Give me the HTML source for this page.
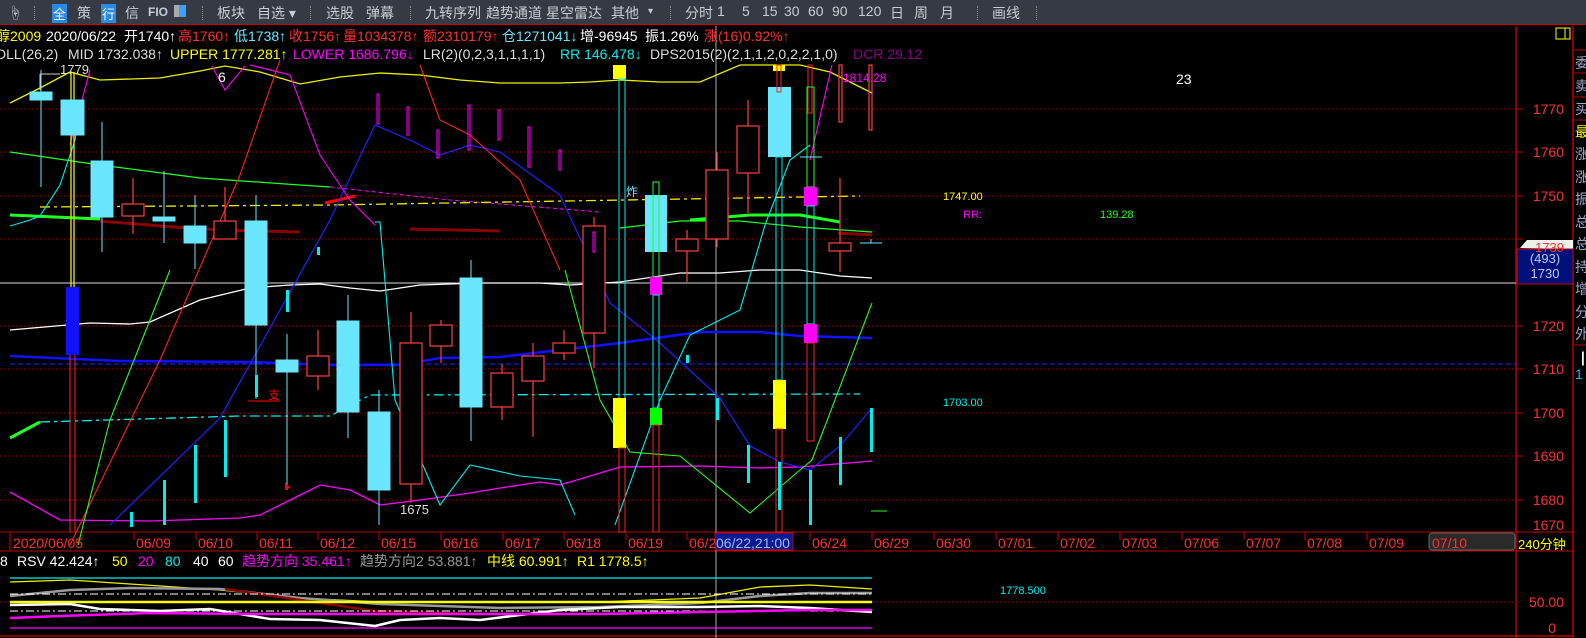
<!DOCTYPE html>
<html><head><meta charset="utf-8"><style>
*{margin:0;padding:0;box-sizing:border-box}
body{width:1586px;height:638px;background:#000;overflow:hidden;position:relative;font-family:"Liberation Sans","Noto Sans CJK SC",sans-serif}
.t{position:absolute;white-space:nowrap}
#tb{position:absolute;left:0;top:0;width:1586px;height:25px;background:#353a45;border-bottom:1px solid #c00}
#tb span{position:absolute;top:3px;font-size:14px;color:#c8ccd4}
.sep{position:absolute;top:6px;width:1px;height:14px;border-left:1px dotted #888}
.r1{top:28px;font-size:14px;line-height:17px}
.r2{top:46px;font-size:14px;line-height:17px}
.b{top:553px;font-size:14px;line-height:17px}
.pl{position:absolute;left:1516px;width:48px;text-align:right;color:#ff3030;font-size:14px}
.rp{position:absolute;left:1575px;font-size:14px;color:#9aa8c8}
.dt{position:absolute;top:535px;font-size:14px;color:#ff3030}
</style></head><body>
<div id="tb">
<span style="left:8px">☝</span><div class="sep" style="left:34px"></div>
<span style="left:52px;background:#2a8ae0;color:#fff;padding:0 1px;top:4px;font-size:13px">全</span>
<span style="left:77px">策</span>
<span style="left:101px;background:#2a8ae0;color:#fff;padding:0 1px;top:4px;font-size:13px">行</span>
<span style="left:125px">信</span>
<span style="left:148px;font-size:12px;top:5px;font-weight:bold">FIO</span>
<span style="left:174px;top:5px;width:12px;height:12px;background:#3aa0ff;border-left:5px solid #aaa"></span>
<div class="sep" style="left:202px"></div>
<span style="left:217px">板块</span><span style="left:257px">自选 ▾</span>
<div class="sep" style="left:310px"></div>
<span style="left:326px">选股</span><span style="left:366px">弹幕</span>
<div class="sep" style="left:410px"></div>
<span style="left:425px">九转序列</span><span style="left:486px">趋势通道</span><span style="left:546px">星空雷达</span><span style="left:611px">其他</span><span style="left:648px;font-size:10px;top:6px">▾</span>
<div class="sep" style="left:670px"></div>
<span style="left:685px">分时</span><span style="left:717px">1</span><span style="left:742px">5</span><span style="left:762px">15</span><span style="left:784px">30</span><span style="left:808px">60</span><span style="left:832px">90</span><span style="left:858px">120</span><span style="left:890px">日</span><span style="left:914px">周</span><span style="left:940px">月</span>
<div class="sep" style="left:977px"></div>
<span style="left:992px">画线</span><div class="sep" style="left:1036px"></div>
</div>

<svg style="position:absolute;left:0;top:0" width="1586" height="638">
<line x1="1516" y1="26" x2="1516" y2="638" stroke="#b00" stroke-width="1.5"/>
<line x1="1573" y1="26" x2="1573" y2="638" stroke="#b00" stroke-width="1.5"/>
<line x1="0" y1="532" x2="1573" y2="532" stroke="#b00"/>
<line x1="0" y1="551" x2="1573" y2="551" stroke="#b00"/>
<line x1="0" y1="636" x2="1573" y2="636" stroke="#b00" stroke-width="1.5"/>
<rect x="1556" y="28" width="14" height="11" fill="none" stroke="#ff0"/><line x1="1565" y1="28" x2="1565" y2="39" stroke="#ff0"/>
<g stroke="#b00" fill="none"><line x1="1573" y1="50" x2="1586" y2="50"/><line x1="1573" y1="73" x2="1586" y2="73"/><line x1="1573" y1="97" x2="1586" y2="97"/><line x1="1573" y1="120" x2="1586" y2="120"/><line x1="1573" y1="345" x2="1586" y2="345"/></g>
<g stroke="#a00" stroke-dasharray="1.5,2.5">
<line x1="0" y1="109" x2="1516" y2="109"/><line x1="0" y1="152" x2="1516" y2="152"/><line x1="0" y1="196" x2="1516" y2="196"/><line x1="0" y1="239" x2="1516" y2="239"/><line x1="0" y1="326" x2="1516" y2="326"/><line x1="0" y1="369" x2="1516" y2="369"/><line x1="0" y1="413" x2="1516" y2="413"/><line x1="0" y1="456" x2="1516" y2="456"/><line x1="0" y1="500" x2="1516" y2="500"/><line x1="0" y1="602" x2="1516" y2="602"/>
</g>
<g stroke="#b00"><line x1="1516" y1="109" x2="1523" y2="109"/><line x1="1516" y1="152" x2="1523" y2="152"/><line x1="1516" y1="196" x2="1523" y2="196"/><line x1="1516" y1="239" x2="1523" y2="239"/><line x1="1516" y1="326" x2="1523" y2="326"/><line x1="1516" y1="369" x2="1523" y2="369"/><line x1="1516" y1="413" x2="1523" y2="413"/><line x1="1516" y1="456" x2="1523" y2="456"/><line x1="1516" y1="500" x2="1523" y2="500"/></g>
<line x1="0" y1="283" x2="1516" y2="283" stroke="#ddd"/>
<line x1="10" y1="364" x2="1516" y2="364" stroke="#22f" stroke-dasharray="5,3"/>
<line x1="716" y1="26" x2="716" y2="638" stroke="#aaa"/>

<polyline fill="none" stroke="#ee0" stroke-width="1.3" points="10,103 40,88 70,72 100,80 160,78 200,71 225,66 260,72 300,84 340,77 380,73 420,75 460,80 500,83 560,83 590,82 620,80 660,82 700,82 740,65 800,65 830,72 872,93"/>
<polyline fill="none" stroke="#fff" stroke-width="1.3" points="10,330 90,323 130,324 150,322 200,300 250,288 290,285 320,284 350,288 380,291 420,285 480,283 540,283 570,285 620,282 680,273 720,273 760,270 800,270 840,276 872,278"/>
<polyline fill="none" stroke="#f0f" stroke-width="1.3" points="10,492 60,520 150,521 240,518 260,515 300,495 320,485 350,490 380,505 420,500 470,493 500,488 540,482 560,485 620,467 700,466 760,468 800,467 872,461"/>
<polyline fill="none" stroke="#2f2" stroke-width="1.3" points="10,152 100,165 200,178 300,185 330,187"/>
<polyline fill="none" stroke="#f0f" stroke-dasharray="4,3" points="330,187 450,200 600,212"/>
<polyline fill="none" stroke="#2f2" stroke-width="1.2" points="620,228 680,221 740,221 800,227 872,232"/>
<polyline fill="none" stroke="#2f2" stroke-width="3" points="690,220 750,215 800,215 840,222"/>
<polyline fill="none" stroke="#2f2" stroke-width="3" points="10,215 100,219"/>
<polyline fill="none" stroke="#800" stroke-width="3" points="100,221 160,226 220,230 300,232"/>
<polyline fill="none" stroke="#800" stroke-width="3" points="410,229 500,231"/>
<polyline fill="none" stroke="#800" stroke-width="3" points="838,233 872,235"/>
<polyline fill="none" stroke="#f00" stroke-width="3" points="325,203 355,196"/>
<polyline fill="none" stroke="#ee0" stroke-width="1.3" stroke-dasharray="10,4,3,4" points="40,207 330,205 860,196"/>
<polyline fill="none" stroke="#0ee" stroke-width="1.3" stroke-dasharray="10,4,3,4" points="40,422 240,416 330,416 370,395 860,394"/>
<polyline fill="none" stroke="#2f2" stroke-width="3" points="10,438 40,422"/>
<polyline fill="none" stroke="#11f" stroke-width="2.5" points="10,356 120,361 250,362 330,365 400,365 440,358 500,357 560,350 620,343 700,332 760,332 800,336 872,338"/>
<polyline fill="none" stroke="#22f" stroke-width="1.2" points="110,525 220,418 330,220 375,125 410,140 440,155 470,145 500,152 560,195 610,303 660,343 720,398 750,446 780,462 810,470 840,446 871,409"/>
<polyline fill="none" stroke="#f22" stroke-width="1.1" points="70,545 160,360 240,175 280,60"/>
<polyline fill="none" stroke="#f22" stroke-width="1.1" points="420,65 440,120 470,135 520,180 560,270"/>
<polyline fill="none" stroke="#f0f" stroke-width="1.1" points="70,145 90,70"/>
<polyline fill="none" stroke="#f0f" stroke-width="1.1" points="250,65 290,75 320,155 350,200 375,225"/>
<polyline fill="none" stroke="#f0f" stroke-width="1.1" points="212,66 225,90 245,66"/>
<polyline fill="none" stroke="#f0f" stroke-width="1.1" points="810,160 832,65"/>
<polyline fill="none" stroke="#0ee" stroke-width="1.1" points="10,226 30,220 40,216 60,185 75,140 82,100"/>
<polyline fill="none" stroke="#0ee" stroke-width="1.1" points="375,222 380,222 395,400 440,505 470,465 520,476 560,480 575,515"/>
<polyline fill="none" stroke="#0ee" stroke-width="1.1" points="615,525 660,400 690,335 740,310 765,225 790,160 810,145"/>
<polyline fill="none" stroke="#2f2" stroke-width="1.1" points="78,545 110,420 150,320 170,270"/>
<polyline fill="none" stroke="#2f2" stroke-width="1.1" points="565,270 600,400 630,452 680,456 750,513 800,470 812,460 872,303"/>
<line x1="71" y1="72" x2="71" y2="287" stroke="#ee0" stroke-width="1.3"/><line x1="74" y1="72" x2="74" y2="287" stroke="#ee0" stroke-width="1.3"/>
<rect x="66" y="287" width="13" height="68" fill="#11f"/>
<line x1="70" y1="355" x2="70" y2="532" stroke="#f22"/><line x1="75" y1="355" x2="75" y2="532" stroke="#f22"/>
<line x1="40" y1="74" x2="60" y2="74" stroke="#ccc"/><line x1="40" y1="74" x2="40" y2="90" stroke="#ccc"/>
<g stroke="#6ae6ff" fill="#6ae6ff">
<line x1="41" y1="70" x2="41" y2="187"/><rect x="30" y="92" width="22" height="8"/>
<rect x="61" y="100" width="23" height="35"/>
<line x1="102" y1="122" x2="102" y2="252"/><rect x="91" y="161" width="22" height="56"/>
<line x1="164" y1="171" x2="164" y2="243"/><rect x="153" y="217" width="22" height="4"/>
<line x1="195" y1="195" x2="195" y2="269"/><rect x="184" y="226" width="22" height="17"/>
<line x1="256" y1="195" x2="256" y2="399"/><rect x="245" y="221" width="22" height="104"/>
<line x1="287" y1="334" x2="287" y2="490"/><rect x="276" y="360" width="22" height="12"/>
<line x1="348" y1="295" x2="348" y2="438"/><rect x="337" y="321" width="22" height="91"/>
<line x1="379" y1="390" x2="379" y2="525"/><rect x="368" y="412" width="22" height="78"/>
<line x1="471" y1="260" x2="471" y2="441"/><rect x="460" y="278" width="22" height="129"/>
</g>
<g stroke="#ff4040" fill="none" stroke-width="1.2">
<line x1="133" y1="178" x2="133" y2="234"/><rect x="122" y="204" width="22" height="12" fill="#000"/>
<line x1="225" y1="187" x2="225" y2="239"/><rect x="214" y="221" width="22" height="18" fill="#000"/>
<line x1="318" y1="330" x2="318" y2="390"/><rect x="307" y="356" width="22" height="20" fill="#000"/>
<line x1="411" y1="312" x2="411" y2="503"/><rect x="400" y="343" width="22" height="141" fill="#000"/>
<line x1="441" y1="320" x2="441" y2="363"/><rect x="430" y="325" width="22" height="21" fill="#000"/>
<line x1="502" y1="364" x2="502" y2="420"/><rect x="491" y="373" width="22" height="34" fill="#000"/>
<line x1="533" y1="343" x2="533" y2="437"/><rect x="522" y="356" width="22" height="25" fill="#000"/>
<line x1="564" y1="330" x2="564" y2="360"/><rect x="553" y="343" width="22" height="10" fill="#000"/>
<line x1="594" y1="217" x2="594" y2="368"/><rect x="583" y="226" width="22" height="107" fill="#000"/>
<line x1="687" y1="230" x2="687" y2="282"/><rect x="676" y="239" width="22" height="12" fill="#000"/>
<line x1="717" y1="152" x2="717" y2="247"/><rect x="706" y="170" width="22" height="69" fill="#000"/>
<line x1="748" y1="100" x2="748" y2="213"/><rect x="737" y="126" width="22" height="47" fill="#000"/>
<line x1="840" y1="178" x2="840" y2="272"/><rect x="829" y="243" width="22" height="8" fill="#000"/>
<rect x="839" y="65" width="3" height="57"/><rect x="869" y="65" width="3" height="65"/>
</g>
<g stroke="#f0f" fill="none"><rect x="377" y="94" width="2" height="30"/><rect x="407" y="107" width="2" height="28"/><rect x="437" y="130" width="2" height="28"/><rect x="468" y="105" width="2" height="45"/><rect x="498" y="110" width="2" height="30"/><rect x="528" y="127" width="2" height="40"/><rect x="559" y="150" width="2" height="20"/><rect x="593" y="232" width="2" height="20"/></g>
<rect x="613" y="65" width="13" height="14" fill="#ff0"/>
<rect x="619" y="79" width="6" height="320" fill="none" stroke="#0ee"/>
<rect x="613" y="398" width="13" height="50" fill="#ff0"/>
<rect x="619" y="448" width="6" height="84" fill="none" stroke="#f22"/>
<rect x="645" y="195" width="22" height="57" fill="#6ae6ff"/>
<rect x="653" y="182" width="6" height="95" fill="none" stroke="#2f2"/>
<rect x="650" y="277" width="12" height="18" fill="#f0f"/>
<rect x="653" y="295" width="6" height="113" fill="none" stroke="#0ee"/>
<rect x="650" y="408" width="12" height="17" fill="#0f0"/>
<rect x="653" y="425" width="6" height="107" fill="none" stroke="#f22"/>
<rect x="773" y="65" width="12" height="6" fill="#ff0"/>
<rect x="768" y="87" width="23" height="70" fill="#6ae6ff"/>
<rect x="777" y="65" width="4" height="27" fill="none" stroke="#f22"/>
<rect x="776" y="157" width="6" height="223" fill="none" stroke="#0ee"/>
<rect x="773" y="380" width="13" height="49" fill="#ff0"/>
<rect x="776" y="429" width="6" height="103" fill="none" stroke="#f22"/>
<rect x="808" y="65" width="4" height="48" fill="none" stroke="#f22"/>
<rect x="807" y="87" width="7" height="100" fill="none" stroke="#2f2"/>
<rect x="804" y="187" width="13" height="19" fill="#f0f"/>
<rect x="807" y="206" width="7" height="118" fill="none" stroke="#0ee"/>
<rect x="804" y="324" width="13" height="19" fill="#f0f"/>
<rect x="807" y="343" width="7" height="98" fill="none" stroke="#f22"/>
<line x1="800" y1="157" x2="822" y2="157" stroke="#6ae6ff"/>
<line x1="860" y1="243" x2="882" y2="243" stroke="#6ae6ff"/><line x1="871" y1="239" x2="871" y2="243" stroke="#6ae6ff"/>
<line x1="871" y1="511" x2="887" y2="511" stroke="#2f2"/>
<g fill="#0ee"><rect x="163" y="480" width="3" height="45"/><rect x="194" y="445" width="3" height="58"/><rect x="224" y="420" width="3" height="57"/><rect x="255" y="375" width="3" height="22"/><rect x="286" y="290" width="3" height="22"/><rect x="317" y="247" width="3" height="8"/><rect x="686" y="355" width="3" height="8"/><rect x="716" y="398" width="3" height="22"/><rect x="747" y="445" width="3" height="38"/><rect x="778" y="462" width="3" height="48"/><rect x="809" y="470" width="3" height="55"/><rect x="839" y="437" width="3" height="48"/><rect x="870" y="408" width="3" height="44"/><rect x="130" y="512" width="3" height="15"/></g>
<polygon points="285,482 290,488 285,490" fill="#f00"/>
<line x1="248" y1="401" x2="280" y2="401" stroke="#f00"/>
<g stroke="#c00"><line x1="10" y1="532" x2="10" y2="551"/><line x1="134" y1="532" x2="134" y2="540"/><line x1="196" y1="532" x2="196" y2="540"/><line x1="257" y1="532" x2="257" y2="540"/><line x1="318" y1="532" x2="318" y2="540"/><line x1="379" y1="532" x2="379" y2="540"/><line x1="441" y1="532" x2="441" y2="540"/><line x1="503" y1="532" x2="503" y2="540"/><line x1="564" y1="532" x2="564" y2="540"/><line x1="626" y1="532" x2="626" y2="540"/><line x1="687" y1="532" x2="687" y2="540"/><line x1="810" y1="532" x2="810" y2="540"/><line x1="872" y1="532" x2="872" y2="540"/><line x1="934" y1="532" x2="934" y2="540"/><line x1="996" y1="532" x2="996" y2="540"/><line x1="1058" y1="532" x2="1058" y2="540"/><line x1="1120" y1="532" x2="1120" y2="540"/><line x1="1182" y1="532" x2="1182" y2="540"/><line x1="1244" y1="532" x2="1244" y2="540"/><line x1="1305" y1="532" x2="1305" y2="540"/><line x1="1367" y1="532" x2="1367" y2="540"/></g>
<rect x="715" y="533" width="78" height="17" fill="#0a1a90" stroke="#c00"/>
<rect x="1429" y="533" width="86" height="17" rx="3" fill="#2a2a2a" stroke="#666"/>
<polygon points="1520,248 1527,240 1573,240 1573,249" fill="#eef2ea"/>
<rect x="1517" y="249" width="56" height="35" fill="#00107a" stroke="#c00"/>
<line x1="10" y1="578" x2="872" y2="578" stroke="#0ee" stroke-width="1.3"/>
<polyline fill="none" stroke="#ee0" stroke-width="1.3" points="10,582 70,580 130,584 220,590 300,598 380,602 600,602 700,598 760,587 810,585 872,589"/>
<polyline fill="none" stroke="#999" stroke-width="2.5" points="10,596 70,590 130,588 220,589 300,598 380,604 500,608 600,607 700,603 760,596 810,593 872,593"/>
<polyline fill="none" stroke="#800" stroke-width="2.5" points="225,589 300,600 375,611 480,614 560,614"/>
<line x1="10" y1="594" x2="872" y2="594" stroke="#fff" stroke-dasharray="8,3,2,3"/>
<line x1="10" y1="602" x2="872" y2="602" stroke="#ff0" stroke-width="2.5"/>
<line x1="10" y1="611" x2="872" y2="611" stroke="#fff" stroke-dasharray="8,3,2,3"/>
<polyline fill="none" stroke="#fff" stroke-width="2.5" points="10,605 70,604 100,609 160,611 210,609 240,614 270,619 320,620 375,626 400,620 440,618 480,620 560,610 620,607 700,607 760,606 810,608 872,612"/>
<polyline fill="none" stroke="#f0f" stroke-width="2.5" points="10,618 60,616 150,613 260,614 400,614 600,614 700,612 810,610 872,610"/>
<line x1="10" y1="628" x2="872" y2="628" stroke="#f0f" stroke-width="1.3"/>
</svg>

<div class="t r1" style="left:-4px;color:#ff0">醇2009</div>
<div class="t r1" style="left:46px;color:#fff">2020/06/22</div>
<div class="t r1" style="left:124px;color:#fff">开1740↑</div>
<div class="t r1" style="left:178px;color:#ff3030">高1760↑</div>
<div class="t r1" style="left:234px;color:#6ae6ff">低1738↑</div>
<div class="t r1" style="left:289px;color:#ff3030">收1756↑</div>
<div class="t r1" style="left:343px;color:#ff3030">量1034378↑</div>
<div class="t r1" style="left:423px;color:#ff3030">额2310179↑</div>
<div class="t r1" style="left:502px;color:#6ae6ff">仓1271041↓</div>
<div class="t r1" style="left:580px;color:#fff">增-96945</div>
<div class="t r1" style="left:645px;color:#fff">振1.26%</div>
<div class="t r1" style="left:704px;color:#ff3030">涨(16)0.92%↑</div>
<div class="t r2" style="left:-4px;color:#ddd">DLL(26,2)</div>
<div class="t r2" style="left:68px;color:#ddd">MID 1732.038↑</div>
<div class="t r2" style="left:170px;color:#ff0">UPPER 1777.281↑</div>
<div class="t r2" style="left:293px;color:#f0f">LOWER 1686.796↓</div>
<div class="t r2" style="left:423px;color:#ddd">LR(2)(0,2,3,1,1,1,1)</div>
<div class="t r2" style="left:560px;color:#0ee">RR 146.478↓</div>
<div class="t r2" style="left:650px;color:#ddd">DPS2015(2)(2,1,1,2,0,2,2,1,0)</div>
<div class="t r2" style="left:853px;color:#808">DCR 29.12</div>

<div class="t" style="left:60px;top:62px;font-size:13px;color:#ddd">1779</div>
<div class="t" style="left:218px;top:69px;font-size:14px;color:#fff">6</div>
<div class="t" style="left:1176px;top:71px;font-size:14px;color:#fff">23</div>
<div class="t" style="left:843px;top:71px;font-size:12px;color:#f0f">1814.28</div>
<div class="t" style="left:626px;top:183px;font-size:12px;color:#6ae6ff">炸</div>
<div class="t" style="left:268px;top:386px;font-size:12px;color:#f00">支</div>
<div class="t" style="left:400px;top:502px;font-size:13px;color:#ddd">1675</div>
<div class="t" style="left:943px;top:191px;font-size:11px;color:#ff0">1747.00</div>
<div class="t" style="left:963px;top:209px;font-size:11px;color:#f0f">RR:</div>
<div class="t" style="left:1100px;top:209px;font-size:11px;color:#2f2">139.28</div>
<div class="t" style="left:943px;top:397px;font-size:11px;color:#0ee">1703.00</div>
<div class="t" style="left:1000px;top:585px;font-size:11px;color:#0ee">1778.500</div>

<div class="pl" style="top:101px">1770</div><div class="pl" style="top:144px">1760</div><div class="pl" style="top:188px">1750</div>
<div class="pl" style="top:240px;font-size:13px">1739</div>
<div class="t" style="left:1517px;top:251px;width:56px;text-align:center;font-size:13px;color:#b8c8f0">(493)</div>
<div class="t" style="left:1517px;top:266px;width:56px;text-align:center;font-size:13px;color:#b8c8f0">1730</div>
<div class="pl" style="top:318px">1720</div><div class="pl" style="top:361px">1710</div><div class="pl" style="top:405px">1700</div><div class="pl" style="top:448px">1690</div><div class="pl" style="top:492px">1680</div><div class="pl" style="top:517px">1670</div>
<div class="pl" style="top:594px">50.00</div><div class="pl" style="top:620px;width:40px">0</div>
<div class="t" style="left:1518px;top:534px;font-size:13px;color:#ff0">240分钟</div>

<div class="rp" style="top:53px">委</div><div class="rp" style="top:76px">卖</div><div class="rp" style="top:99px">买</div><div class="rp" style="top:122px;color:#ff0">最</div><div class="rp" style="top:144px">涨</div><div class="rp" style="top:167px">涨</div><div class="rp" style="top:189px">振</div><div class="rp" style="top:212px">总</div><div class="rp" style="top:234px">总</div><div class="rp" style="top:257px">持</div><div class="rp" style="top:279px">增</div><div class="rp" style="top:302px">分</div><div class="rp" style="top:324px">外</div>
<div class="rp" style="top:349px;color:#fff;left:1582px">▏</div><div class="rp" style="top:366px;color:#3af">1</div>

<div class="dt" style="left:13px">2020/06/05</div><div class="dt" style="left:136px">06/09</div><div class="dt" style="left:198px">06/10</div><div class="dt" style="left:259px">06/11</div><div class="dt" style="left:320px">06/12</div><div class="dt" style="left:381px">06/15</div><div class="dt" style="left:443px">06/16</div><div class="dt" style="left:505px">06/17</div><div class="dt" style="left:566px">06/18</div><div class="dt" style="left:628px">06/19</div><div class="dt" style="left:689px">06/2</div>
<div class="dt" style="left:716px;color:#9ab8ff">06/22,21:00</div>
<div class="dt" style="left:812px">06/24</div><div class="dt" style="left:874px">06/29</div><div class="dt" style="left:936px">06/30</div><div class="dt" style="left:998px">07/01</div><div class="dt" style="left:1060px">07/02</div><div class="dt" style="left:1122px">07/03</div><div class="dt" style="left:1184px">07/06</div><div class="dt" style="left:1246px">07/07</div><div class="dt" style="left:1307px">07/08</div><div class="dt" style="left:1369px">07/09</div><div class="dt" style="left:1432px">07/10</div>

<div class="t b" style="left:0;color:#fff">8</div>
<div class="t b" style="left:17px;color:#fff">RSV 42.424↑</div>
<div class="t b" style="left:112px;color:#ff0">50</div>
<div class="t b" style="left:138px;color:#f0f">20</div>
<div class="t b" style="left:165px;color:#0ee">80</div>
<div class="t b" style="left:193px;color:#fff">40</div>
<div class="t b" style="left:218px;color:#fff">60</div>
<div class="t b" style="left:242px;color:#f0f">趋势方向 35.461↑</div>
<div class="t b" style="left:360px;color:#999">趋势方向2 53.881↑</div>
<div class="t b" style="left:487px;color:#ff0">中线 60.991↑</div>
<div class="t b" style="left:577px;color:#ff0">R1 1778.5↑</div>
</body></html>
